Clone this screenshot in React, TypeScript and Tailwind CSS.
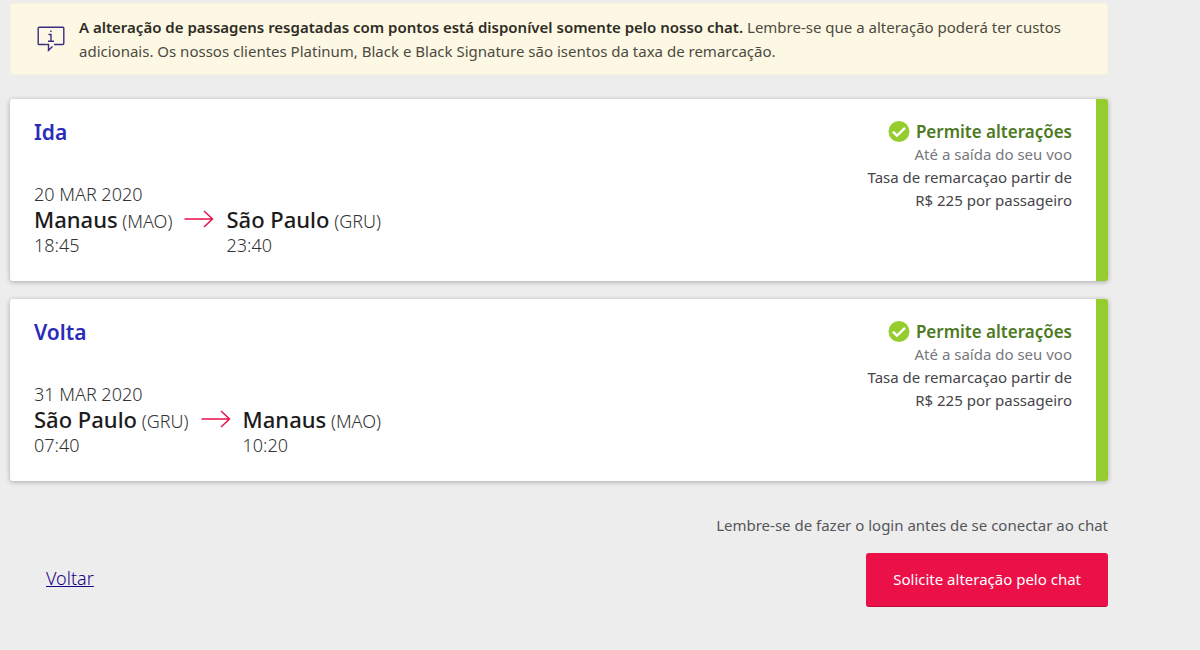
import React from 'react';

interface Stop {
    city: string;
    code: string;
    time: string;
}

interface Flight {
    title: string;
    date: string;
    from: Stop;
    to: Stop;
}

const flights: Flight[] = [
    {
        title: 'Ida',
        date: '20 MAR 2020',
        from: { city: 'Manaus', code: 'MAO', time: '18:45' },
        to: { city: 'São Paulo', code: 'GRU', time: '23:40' },
    },
    {
        title: 'Volta',
        date: '31 MAR 2020',
        from: { city: 'São Paulo', code: 'GRU', time: '07:40' },
        to: { city: 'Manaus', code: 'MAO', time: '10:20' },
    },
];

const InfoIcon: React.FC = () => (
    <svg className="w-7 h-7 shrink-0" viewBox="0 0 28 28" fill="none" stroke="#3d2a84" strokeWidth="1.4" aria-hidden="true">
        <path d="M9.5 19.5H2.2a1 1 0 0 1-1-1V3.2a1 1 0 0 1 1-1h23.6a1 1 0 0 1 1 1V18.5a1 1 0 0 1-1 1H17" />
        <path d="M9.5 19.5H11.5V25.3L15.5 21.5" />
        <path d="M11.5 9.5H14V16M11 16.2H17" />
        <path d="M13.2 6.3H14.6" strokeWidth="1.6" />
    </svg>
);

const ArrowIcon: React.FC = () => (
    <svg className="w-[30px] h-[18px]" viewBox="0 0 30 18" fill="none" stroke="#e8114b" strokeWidth="1.5" aria-hidden="true">
        <path d="M0.5 9H28.5M20 1L28.5 9L20 17" />
    </svg>
);

const CheckIcon: React.FC = () => (
    <svg className="w-[22px] h-[22px]" viewBox="0 0 22 22" aria-hidden="true">
        <circle cx="11" cy="10.5" r="10.5" fill="#96cd2e" />
        <path d="M4.8 10.6L9 14.6L17 6.8" fill="none" stroke="#fff" strokeWidth="2.4" />
    </svg>
);

const StopInfo: React.FC<{ stop: Stop }> = ({ stop }) => (
    <div>
        <p className="text-lg leading-6">
            <strong className="text-[22px] font-medium text-[#1c1c1c]">{stop.city}</strong> ({stop.code})
        </p>
        <p className="text-lg leading-[25px]">{stop.time}</p>
    </div>
);

const FlightCard: React.FC<{ flight: Flight }> = ({ flight }) => (
    <section className="flex justify-between rounded-[3px] border-r-12 border-[#96cd2e] bg-white px-6 pt-[19px] pb-[23px] shadow-[0_1px_5px_rgba(0,0,0,0.3)]">
        <div className="font-light text-[#333]">
            <h2 className="text-[21px] leading-7 font-semibold text-[#2a2cb8]">{flight.title}</h2>
            <p className="mt-9 text-lg leading-[25px]">{flight.date}</p>
            <div className="flex">
                <StopInfo stop={flight.from} />
                <div className="px-3 pt-[3px]">
                    <ArrowIcon />
                </div>
                <StopInfo stop={flight.to} />
            </div>
        </div>
        <div className="pt-0.5 text-right text-[15px] leading-[23px] text-[#45454a]">
            <h3 className="flex items-center justify-end gap-1.5 text-[17px] leading-[23px] font-semibold text-[#4d7a1f]">
                <CheckIcon />
                Permite alterações
            </h3>
            <p className="text-[#77777c]">Até a saída do seu voo</p>
            <p>
                Tasa de remarcaçao partir de
                <br />
                R$ 225 por passageiro
            </p>
        </div>
    </section>
);

export default function App() {
    return (
        <main className="min-h-screen bg-[#ededed] pt-[3px] pr-[92px] pl-2.5 pb-10 font-['Noto_Sans',sans-serif]">
            <div className="flex items-center gap-3.5 rounded-[3px] border border-[#fbf2da] bg-[#fdf8e3] py-[11px] pr-6 pl-[26px]">
                <InfoIcon />
                <p className="text-[15px] leading-6 text-[#4c4a42]">
                    <strong className="font-semibold text-[#2e2c26]">
                        A alteração de passagens resgatadas com pontos está disponível somente pelo nosso chat.
                    </strong>{' '}
                    Lembre-se que a alteração poderá ter custos adicionais. Os nossos clientes Platinum, Black e Black Signature são isentos da taxa de remarcação.
                </p>
            </div>

            <div className="mt-6 space-y-[18px]">
                {flights.map(flight => (
                    <FlightCard key={flight.title} flight={flight} />
                ))}
            </div>

            <p className="mt-8 text-right text-[15px] leading-6 text-[#55565a]">Lembre-se de fazer o login antes de se conectar ao chat</p>
            <div className="mt-4 flex items-center justify-between">
                <a href="#" className="mb-1 ml-9 text-lg leading-6 font-light text-[#1b0088] underline">Voltar</a>
                <button type="button" className="rounded-[3px] border-b border-[#b80d3c] bg-[#ec1049] px-[27px] py-3.5 text-[15px] leading-[25px] text-white">
                    Solicite alteração pelo chat
                </button>
            </div>
        </main>
    );
}
